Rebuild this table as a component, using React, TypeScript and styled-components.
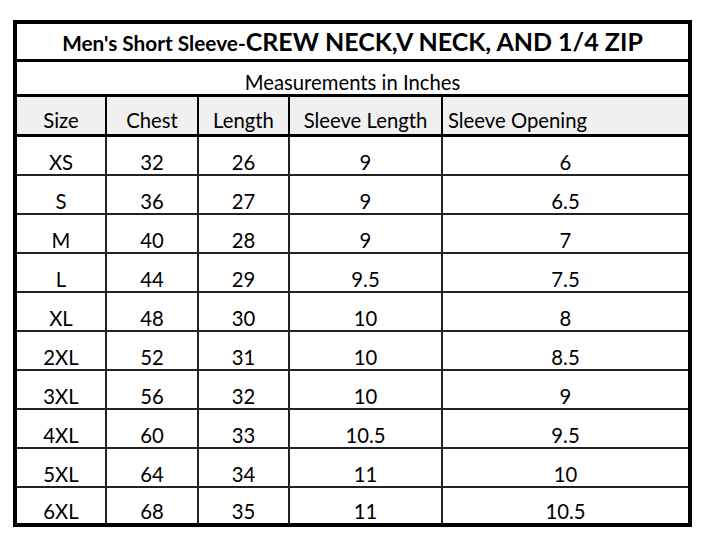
import React from "react";
import styled, { createGlobalStyle } from "styled-components";

const GlobalStyle = createGlobalStyle`
  html, body { margin: 0; padding: 0; background: #ffffff; }
  body { font-family: "Lato", "Open Sans", sans-serif; color: #000; }
`;

const Page = styled.div`
  padding: 20px 0 0 13px;
`;

const Table = styled.div`
  width: 679px;
  box-sizing: border-box;
  border: 4px solid #000;
  display: flex;
  flex-direction: column;
`;

const TitleRow = styled.div`
  height: 35px;
  border-bottom: 3px solid #000;
  text-align: center;
  font-weight: 700;
  font-size: 25px;
  line-height: 35px;
  white-space: nowrap;
`;

const TitleSmall = styled.span`
  font-size: 20.8px;
  line-height: 1;
`;

const TitleBig = styled.span`
  font-size: 25px;
  line-height: 1;
`;

const SubRow = styled.div`
  box-sizing: border-box;
  height: 35px;
  border-bottom: 3px solid #000;
  display: flex;
  align-items: flex-end;
  justify-content: center;
  padding-bottom: 2px;
  font-size: 20.3px;
  line-height: 20px;
`;

const Grid = styled.div<{ $header?: boolean }>`
  display: grid;
  grid-template-columns: 90px 92px 91px 153px 245px;
  height: 37px;
  background: ${(p) => (p.$header ? "#f0f0f0" : "#fff")};
  border-bottom: ${(p) => (p.$header ? "3px solid #000" : "2px solid #222")};
  &:last-child {
    border-bottom: none;
    height: 35px;
  }
`;

const Cell = styled.div<{ $left?: boolean; $header?: boolean }>`
  box-sizing: border-box;
  border-right: 2px solid ${(p) => (p.$header ? "#000" : "#222")};
  display: flex;
  align-items: flex-end;
  justify-content: ${(p) => (p.$left ? "flex-start" : "center")};
  padding: 0 0 ${(p) => (p.$header ? 4 : 2)}px ${(p) => (p.$left ? 5 : 0)}px;
  font-size: 20.3px;
  line-height: 20px;
  &:last-child {
    border-right: none;
  }
`;

const headers = ["Size", "Chest", "Length", "Sleeve Length", "Sleeve Opening"];

const rows: [string, string, string, string, string][] = [
  ["XS", "32", "26", "9", "6"],
  ["S", "36", "27", "9", "6.5"],
  ["M", "40", "28", "9", "7"],
  ["L", "44", "29", "9.5", "7.5"],
  ["XL", "48", "30", "10", "8"],
  ["2XL", "52", "31", "10", "8.5"],
  ["3XL", "56", "32", "10", "9"],
  ["4XL", "60", "33", "10.5", "9.5"],
  ["5XL", "64", "34", "11", "10"],
  ["6XL", "68", "35", "11", "10.5"],
];

export default function App() {
  return (
    <>
      <GlobalStyle />
      <Page>
        <Table>
          <TitleRow>
            <TitleSmall>Men's Short Sleeve-</TitleSmall>
            <TitleBig>CREW NECK,V NECK, AND 1/4 ZIP</TitleBig>
          </TitleRow>
          <SubRow>Measurements in Inches</SubRow>
          <Grid $header>
            {headers.map((h, i) => (
              <Cell key={h} $header $left={i === 4}>
                {h}
              </Cell>
            ))}
          </Grid>
          {rows.map((r) => (
            <Grid key={r[0]}>
              {r.map((v, i) => (
                <Cell key={i}>{v}</Cell>
              ))}
            </Grid>
          ))}
        </Table>
      </Page>
    </>
  );
}
